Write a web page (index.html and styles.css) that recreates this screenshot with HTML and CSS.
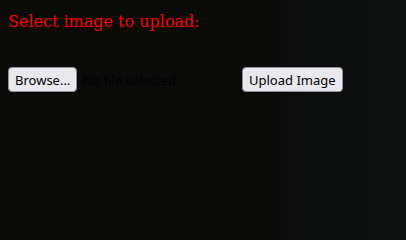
FILE: index.html
```html
<!DOCTYPE html>
<html>
<head>
<meta charset="utf-8">
<link rel="stylesheet" href="styles.css">
</head>
<body>
<form class="upload-form">
  <p class="prompt">Select image to upload:</p>
  <div class="controls">
    <label class="file-picker">
      <span class="btn">Browse...</span>
      <span class="file-status">No file selected.</span>
    </label>
    <button class="btn submit" type="button">Upload Image</button>
  </div>
</form>
</body>
</html>
```
FILE: styles.css
```css
html, body {
  margin: 0;
  height: 100%;
}
body {
  background: linear-gradient(90deg, #0a0b09 0%, #0a0b09 68%, #0c0e0d 72%, #0d0f0e 90%, #111312 100%);
  padding: 8px;
  box-sizing: border-box;
}
.upload-form {
  margin: 0;
}
.prompt {
  margin: 4px 0 0 0;
  font-family: "DejaVu Serif", serif;
  font-size: 16px;
  line-height: 19px;
  color: #ff0000;
}
.controls {
  display: flex;
  align-items: center;
  margin-top: 36px;
}
.file-picker {
  display: flex;
  align-items: center;
  gap: 5px;
  width: 234px;
}
.btn {
  box-sizing: border-box;
  height: 25px;
  padding: 0 6px;
  display: inline-flex;
  align-items: center;
  justify-content: center;
  background: #e9e9ed;
  border: 1px solid #8f8f9d;
  border-radius: 4px;
  font-family: "Noto Sans", sans-serif;
  font-size: 13px;
  color: #000;
}
.file-status {
  font-family: "Noto Sans", sans-serif;
  font-size: 13px;
  color: #000;
}
.submit {
  margin: 0;
}
```
